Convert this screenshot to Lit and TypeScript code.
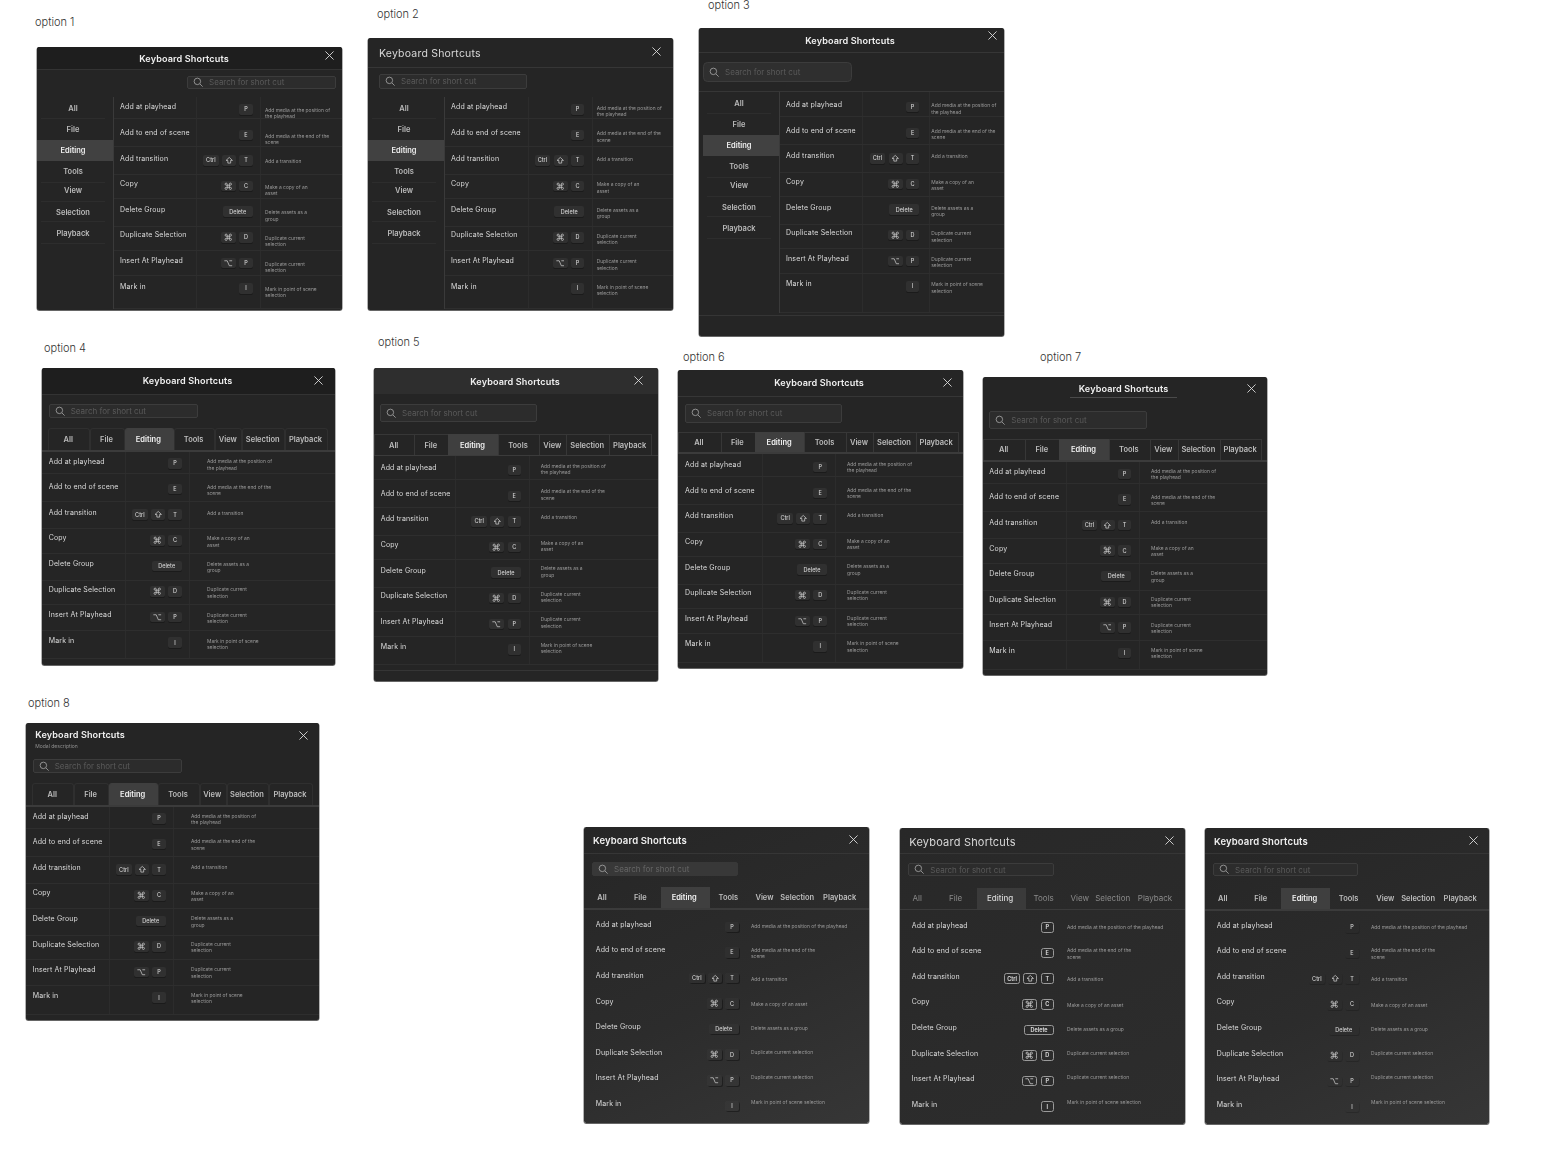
import { LitElement, html, css, svg, nothing } from "lit";
import { customElement, property } from "lit/decorators.js";

type KeyId = "cmd" | "alt" | "shift" | string;
interface Cfg {
  n: number; x: number; y: number; w: number; h: number;
  lx: number; ly: number;
  align: "center" | "left"; titleCls: string; tShift?: number; tDy?: number;
  headH: number; headCls: string; desc?: boolean; underline?: number[];
  closeX: number; closeY: number;
  sx: number; sy: number; sw: number; sh: number; searchCls?: string;
  navY: number; side?: boolean; sideOff?: number;
  tabs?: number[]; tabCls?: string; lineH?: number; tabH?: number;
  labelX: number; labelY: number; col1: number; col2: number; keyR: number; descX: number; dDy: number;
  dividers: boolean; listEnd: number; footer?: number;
  keyCls: string; bg: string; wide?: boolean; soft?: boolean;
}

const NAV = ["All", "File", "Editing", "Tools", "View", "Selection", "Playback"];
const SIDE_H = [22, 21, 21, 21.5, 19, 20.5, 21.5];
const SIDE_DY = [0, 0, 0, 0, -3, 1.5, 1.5];
const ROW_H = [22, 28, 27.5, 24.5, 27.5, 24, 25.5];
const PITCH = 25.6;
const WIDE_DY = [2, 0, 3.3, 3, 1.3, 0, -1, -1.7];
const ROWS: { t: string; k: KeyId[]; d: string; w: string }[] = [
  { t: "Add at playhead", k: ["P"], d: "Add media at the position of|the playhead", w: "Add media at the position of the playhead" },
  { t: "Add to end of scene", k: ["E"], d: "Add media at the end of the|scene", w: "Add media at the end of the|scene" },
  { t: "Add transition", k: ["Ctrl", "shift", "T"], d: "Add a transition", w: "Add a transition" },
  { t: "Copy", k: ["cmd", "C"], d: "Make a copy of an|asset", w: "Make a copy of an asset" },
  { t: "Delete Group", k: ["Delete"], d: "Delete assets as a|group", w: "Delete assets as a group" },
  { t: "Duplicate Selection", k: ["cmd", "D"], d: "Duplicate current|selection", w: "Duplicate current selection" },
  { t: "Insert At Playhead", k: ["alt", "P"], d: "Duplicate current|selection", w: "Duplicate current selection" },
  { t: "Mark in", k: ["I"], d: "Mark in point of scene|selection", w: "Mark in point of scene selection" },
];

const CFGS: Cfg[] = [
  { n: 1, x: 37, y: 47, w: 305, h: 263, lx: 35, ly: 22, align: "center", titleCls: "bold", tShift: -5.5, headH: 23, headCls: "dark", closeX: 325, closeY: 51,
    sx: 187, sy: 76, sw: 149, sh: 12.5, navY: 97, side: true, sideOff: 0,
    labelX: 120, labelY: 107.4, col1: 196, col2: 260, keyR: 252.7, descX: 265, dDy: 2.7, dividers: true, listEnd: 309, keyCls: "filled", bg: "plain" },
  { n: 2, x: 368, y: 38, w: 305, h: 272, lx: 377, ly: 14, align: "left", titleCls: "thin small", tShift: -1, tDy: 1, headH: 29.5, headCls: "line", closeX: 652, closeY: 47,
    sx: 379, sy: 74, sw: 148, sh: 14.5, navY: 97, side: true, sideOff: 0,
    labelX: 451, labelY: 107.4, col1: 528, col2: 591.7, keyR: 584.3, descX: 596.7, dDy: 0.4, dividers: true, listEnd: 309, keyCls: "filled", bg: "plain" },
  { n: 3, x: 699, y: 28, w: 305, h: 308, lx: 708, ly: 5, align: "center", titleCls: "bold", tShift: -1.5, tDy: 1, headH: 24.5, headCls: "line", closeX: 988, closeY: 31,
    sx: 703, sy: 62, sw: 149, sh: 20, searchCls: "round", navY: 92, side: true, sideOff: 4,
    labelX: 786, labelY: 105.3, col1: 861.7, col2: 928.7, keyR: 919.3, descX: 931.3, dDy: 0.1, dividers: true, listEnd: 313, footer: 315, keyCls: "filled", bg: "plain" },
  { n: 4, x: 42, y: 368, w: 293, h: 297, lx: 44, ly: 348, align: "center", titleCls: "bold", tShift: -1, headH: 26.5, headCls: "dark", closeX: 314, closeY: 376,
    sx: 48.7, sy: 404, sw: 149, sh: 14, navY: 428.3,
    tabs: [48.3, 90.3, 124.7, 174, 215.3, 242.3, 285.3, 327.7], tabCls: "rounded", tabH: 21.7, lineH: 2,
    labelX: 48.7, labelY: 461.6, col1: 125.3, col2: 189.3, keyR: 181.7, descX: 207, dDy: 0, dividers: true, listEnd: 659.5, keyCls: "filled", bg: "plain" },
  { n: 5, x: 374, y: 368, w: 284, h: 313, lx: 378, ly: 342, align: "center", titleCls: "bold", tShift: -1, tDy: -0.5, headH: 26, headCls: "lighter", closeX: 634, closeY: 376,
    sx: 380, sy: 404.3, sw: 157, sh: 18, navY: 434.3,
    tabs: [374, 414.3, 448.3, 497.7, 539.3, 566.3, 609.3, 652], tabCls: "boxed", tabH: 20.7, lineH: 1,
    labelX: 380.7, labelY: 468.3, col1: 455.3, col2: 528.7, keyR: 521, descX: 540.7, dDy: -2.3, dividers: true, listEnd: 665, footer: 670, keyCls: "filled", bg: "plain" },
  { n: 6, x: 678, y: 370, w: 285, h: 298, lx: 683, ly: 357, align: "center", titleCls: "bold", tShift: -1.5, tDy: -0.5, headH: 26.7, headCls: "line", closeX: 943, closeY: 378,
    sx: 685, sy: 404.3, sw: 157.3, sh: 18.4, navY: 432.3,
    tabs: [678, 720.7, 755, 804.3, 845.7, 873.3, 915.7, 958.7], tabCls: "boxed", tabH: 20, lineH: 2,
    labelX: 685, labelY: 465.3, col1: 761.7, col2: 835, keyR: 827, descX: 847, dDy: -1.1, dividers: true, listEnd: 663, keyCls: "filled", bg: "plain" },
  { n: 7, x: 983, y: 377, w: 284, h: 298, lx: 1040, ly: 357, align: "center", titleCls: "bold", tDy: 1.5, headH: 20.5, headCls: "none", underline: [1070, 1177], closeX: 1247, closeY: 384,
    sx: 989.3, sy: 411, sw: 157.4, sh: 18, navY: 439,
    tabs: [983, 1025.3, 1059.3, 1108.7, 1150, 1177.7, 1220, 1262.3], tabCls: "boxed", tabH: 20.7, lineH: 2,
    labelX: 989.3, labelY: 471.9, col1: 1066.3, col2: 1139.3, keyR: 1131.3, descX: 1151, dDy: -0.8, dividers: true, listEnd: 670, keyCls: "filled", bg: "plain" },
  { n: 8, x: 26, y: 723, w: 293, h: 297, lx: 28, ly: 703, align: "left", titleCls: "bold", headH: 30, headCls: "none", desc: true, closeX: 298.7, closeY: 731,
    sx: 32.7, sy: 759.3, sw: 149, sh: 14, navY: 783.3,
    tabs: [32.3, 74.3, 109, 158.3, 199.7, 226.7, 269.3, 312.7], tabCls: "rounded", tabH: 21.5, lineH: 2,
    labelX: 32.7, labelY: 816.6, col1: 109.3, col2: 173.3, keyR: 165.7, descX: 191, dDy: -0.6, dividers: true, listEnd: 1015, keyCls: "filled", bg: "plain" },
  { n: 9, x: 584, y: 827, w: 285, h: 296, lx: 0, ly: -100, align: "left", titleCls: "bold wide", tDy: 1, headH: 26.7, headCls: "line", closeX: 849, closeY: 835,
    sx: 592, sy: 862.3, sw: 146, sh: 13.4, searchCls: "flat", navY: 887,
    tabs: [584, 622, 660.7, 709.7, 749, 782, 814.6, 866.8], tabCls: "plain", tabH: 20.7, lineH: 2,
    labelX: 595.7, labelY: 924.9, col1: 660, col2: 745, keyR: 738.7, descX: 751, dDy: 0, dividers: false, listEnd: 1123, keyCls: "ghost", bg: "grad", wide: true },
  { n: 10, x: 900, y: 828, w: 285, h: 296, lx: 0, ly: -100, align: "left", titleCls: "thin", tDy: 0.5, headH: 26.3, headCls: "line", closeX: 1165, closeY: 836,
    sx: 908.3, sy: 863.3, sw: 145.4, sh: 12.7, navY: 887.7,
    tabs: [900, 936.6, 976.7, 1025.7, 1063.7, 1097.7, 1129.7, 1182.3], tabCls: "plain soft", tabH: 21.6, lineH: 1,
    labelX: 911.7, labelY: 925.6, col1: 976, col2: 1060, keyR: 1054, descX: 1067, dDy: 0, dividers: false, listEnd: 1124, keyCls: "outline", bg: "flat", wide: true, soft: true },
  { n: 11, x: 1205, y: 828, w: 284, h: 296, lx: 0, ly: -100, align: "left", titleCls: "bold wide", tDy: 0.5, headH: 26.3, headCls: "line", closeX: 1469, closeY: 836,
    sx: 1213, sy: 863.3, sw: 145, sh: 12.7, navY: 887.7,
    tabs: [1205, 1242.4, 1281, 1330.3, 1369, 1403.6, 1434.6, 1487.8], tabCls: "plain", tabH: 21, lineH: 2,
    labelX: 1216.7, labelY: 925.6, col1: 1280, col2: 1365, keyR: 1358.7, descX: 1371, dDy: 0, dividers: false, listEnd: 1124, keyCls: "faint", bg: "grad", wide: true },
];

const ICONS: Record<string, unknown> = {
  cmd: svg`<path d="M15 6v12a3 3 0 1 0 3-3H6a3 3 0 1 0 3 3V6a3 3 0 1 0-3 3h12a3 3 0 1 0-3-3"/>`,
  alt: svg`<path d="M1 5h8l6 14h8M15 5h8"/>`,
  shift: svg`<path d="M12 4 3 12.5h5V20h8v-7.5h5z"/>`,
};
const KEY_W: Record<string, number> = { Ctrl: 15.5, shift: 14, cmd: 15, alt: 15, Delete: 30 };

@customElement("shortcut-modal")
class ShortcutModal extends LitElement {
  @property({ attribute: false }) cfg!: Cfg;

  static styles = css`
    :host { display: flex; flex-direction: column; position: absolute; box-sizing: border-box; overflow: hidden;
      border-radius: 2.5px; background: #252525; box-shadow: 0 0.5px 0 0.5px #666; color: #d6d6d6;
      font-family: Inter, "Liberation Sans", sans-serif; filter: blur(0.3px); }
    :host(.grad) { background: linear-gradient(155deg, #262626 0%, #2c2c2c 55%, #363636 100%); }
    :host(.flat) { background: linear-gradient(155deg, #282828, #2d2d2d); }
    .head { flex: none; display: flex; align-items: center; box-sizing: border-box; }
    .head.center { justify-content: center; }
    .head.dark { background: #1e1e1e; border-bottom: 1px solid #333; }
    .head.line { border-bottom: 1px solid #363636; }
    .head.lighter { background: #2e2e2e; }
    .head.none { border-bottom: 0; }
    .head-stack { display: flex; flex-direction: column; gap: 4px; padding-top: 1px; }
    .title { white-space: nowrap; color: #f0f0f0; }
    .title.bold { font-size: 9.1px; font-weight: 600; letter-spacing: 0.12px; }
    .title.bold.wide { font-size: 9.5px; letter-spacing: 0.14px; }
    .title.thin { font-size: 11px; font-weight: 400; letter-spacing: 0.2px; color: #d8d8d8; }
    .title.thin.small { font-size: 10.5px; }
    .sub { font-size: 5px; line-height: 5px; color: #909090; }
    .underlined { display: flex; justify-content: center; border-bottom: 1px solid #4a4a4a; height: 100%; align-items: center; box-sizing: border-box; width: 100%; }
    .close { position: absolute; width: 9px; height: 9px; stroke: #dcdcdc; stroke-width: 0.8; fill: none; }
    .zone { flex: none; box-sizing: border-box; }
    .search { display: flex; align-items: center; gap: 5.5px; box-sizing: border-box; padding-left: 5px;
      background: #2c2c2c; border: 1px solid #3c3c3c; border-radius: 2px; font-size: 8px; color: #5a5a5a; white-space: nowrap; }
    .search.round { border-radius: 4.5px; background: #2f2f2f; }
    .search.flat { background: #383838; border-color: #383838; color: #666; }
    .search svg { width: 10.5px; height: 10.5px; stroke: #aaa; stroke-width: 0.9; fill: none; flex: none; }
    .body { flex: none; display: flex; }
    .side { flex: none; display: flex; flex-direction: column; }
    .side-item { flex: none; display: flex; align-items: center; justify-content: center; font-size: 7.5px; font-weight: 600;
      color: #bbb; padding-right: 4px; box-sizing: border-box; position: relative; }
    .side-item.sep::after { content: ""; position: absolute; left: 4px; right: 8px; bottom: 0; height: 1px; background: #2d2d2d; }
    .side-item.on { background: #414141; color: #f0f0f0; }
    .side-line { flex: none; width: 1px; background: #3a3a3a; }
    .main { flex: 1; min-width: 0; display: flex; flex-direction: column; }
    .tabs { flex: none; display: flex; }
    .tab { flex: none; display: flex; align-items: center; justify-content: center; box-sizing: border-box; padding-right: 2px;
      font-size: 7.5px; font-weight: 600; color: #bdbdbd; white-space: nowrap; }
    .rounded .tab { border: 1px solid #2f2f2f; border-bottom: 0; border-radius: 3px 3px 0 0; }
    .boxed .tab { border-left: 1px solid #373737; border-top: 1px solid #373737; }
    .boxed .tab:last-child { border-right: 1px solid #373737; }
    .soft .tab { font-weight: 400; color: #8a8a8a; font-size: 8px; }
    .tab.on { background: #3f3f3f; color: #f2f2f2; border-color: #3f3f3f; }
    .soft .tab.on { color: #d8d8d8; font-weight: 500; background: #3a3a3a; }
    .tline { flex: none; background: #3b3b3b; }
    .row { display: grid; box-sizing: border-box; border-bottom: 1px solid #2e2e2e; flex: none; }
    .row.bare { border-bottom: 0; }
    .cell { min-width: 0; padding-top: var(--pt); }
    .cell + .cell { border-left: 1px solid #2c2c2c; }
    .bare .cell + .cell { border-left: 0; }
    .label { font-size: 7px; line-height: 10px; letter-spacing: 0.15px; color: #dcdcdc; white-space: nowrap; }
    .soft .label { color: #c8c8c8; }
    .keys { display: flex; justify-content: flex-end; gap: 3.3px; padding-top: calc(var(--pt) + 1.65px); align-items: flex-start; }
    .key { flex: none; height: 10.5px; display: flex; align-items: center; justify-content: center; box-sizing: border-box;
      border-radius: 2px; font-size: 5.5px; font-weight: 500; color: #d4d4d4; }
    .key.filled { background: #303030; box-shadow: 0 1px 0 #1b1b1b; }
    .key.ghost { background: rgba(255,255,255,.025); box-shadow: 1px 1px 0 rgba(0,0,0,.35); }
    .key.faint { box-shadow: 0.5px 1px 0 rgba(0,0,0,.18); }
    .key.outline { border: 0.7px solid #9a9a9a; border-radius: 2.5px; color: #e0e0e0; font-weight: 600; }
    .key svg { width: 8.5px; height: 8.5px; stroke: currentColor; stroke-width: 2; fill: none; }
    .desc { font-size: 4.9px; line-height: 6.3px; color: #9a9a9a; white-space: nowrap; padding-top: calc(var(--pt) + 1.85px + var(--ddy)); }
    .foot { flex: 1; border-top: 1px solid #353535; }
  `;

  private nav(c: Cfg) {
    const tabs = c.tabs!;
    return html`<div class="tabs ${c.tabCls}" style="padding-left:${tabs[0] - c.x}px;height:${c.tabH}px">
        ${NAV.map((t, i) => html`<div class="tab ${t === "Editing" ? "on" : ""}" style="width:${tabs[i + 1] - tabs[i]}px">${t}</div>`)}
      </div>
      <div class="tline" style="height:${c.lineH}px"></div>`;
  }

  private side(c: Cfg) {
    return html`<div class="side" style="margin-left:${c.sideOff}px;width:76px">
        ${NAV.map((t, i) => html`<div class="side-item ${t === "Editing" ? "on" : i === 1 ? "" : "sep"}"
          style="height:${SIDE_H[i]}px;padding-top:${Math.max(SIDE_DY[i], 0)}px;padding-bottom:${Math.max(-SIDE_DY[i], 0)}px">${t}</div>`)}
      </div>
      <div class="side-line"></div>`;
  }

  private list(c: Cfg, contentX: number, top: number) {
    const off = c.labelY - top;
    const columns = `${c.col1 - contentX}px ${c.col2 - c.col1}px 1fr`;
    let cum = 0;
    return ROWS.map((r, i) => {
      const base = c.dividers ? (ROW_H[i] ?? 0) : PITCH;
      let h = i === 0 ? base + (off - 10) : base;
      const rowTop = top + cum;
      if (i === ROWS.length - 1) h = c.listEnd - rowTop;
      const pt = c.labelY + PITCH * i - rowTop - 5;
      cum += h;
      const dy = c.wide ? WIDE_DY[i] - 0.6 : c.dDy;
      const border = c.dividers ? 1 : 0;
      return html`<div class="row ${c.dividers ? "" : "bare"}"
        style="height:${h}px;grid-template-columns:${columns};--pt:${pt}px;--ddy:${dy}px">
        <div class="cell label" style="padding-left:${c.labelX - contentX}px">${r.t}</div>
        <div class="cell keys" style="padding-right:${c.col2 - c.keyR}px">
          ${r.k.map((k) => html`<div class="key ${c.keyCls}" style="width:${KEY_W[k] ?? 13.5}px">
            ${ICONS[k] ? html`<svg viewBox="0 0 24 24">${ICONS[k]}</svg>` : k}</div>`)}
        </div>
        <div class="cell desc" style="padding-left:${c.descX - c.col2 - border}px">
          ${(c.wide ? r.w : r.d).split("|").map((l, j) => html`${j ? html`<br />` : nothing}${l}`)}
        </div>
      </div>`;
    });
  }

  render() {
    const c = this.cfg;
    const headBottom = c.y + c.headH;
    const contentX = c.side ? c.x + c.sideOff! + 77 : c.x;
    const tabTotal = c.side ? 0 : c.tabH! + c.lineH!;
    const listTop = c.navY + tabTotal;
    const shift = c.tShift ?? 0;
    const titleStyle = `transform:translate(${shift}px,${c.tDy ?? 0}px)`;
    const title = html`<div class="title ${c.titleCls}" style=${titleStyle}>Keyboard Shortcuts</div>`;
    const padLeft = c.underline ? c.underline[0] - c.x : c.align === "left" ? (c.n === 8 ? 9.3 : c.sx - c.x + 1) : 0;
    const padRight = c.underline ? c.x + c.w - c.underline[1] : 0;
    return html`
      <div class="head ${c.headCls} ${c.align}" style="height:${c.headH}px;padding-left:${padLeft}px;padding-right:${padRight}px">
        ${c.desc
          ? html`<div class="head-stack">${title}<div class="sub">Modal description</div></div>`
          : c.underline
            ? html`<div class="underlined">${title}</div>`
            : title}
      </div>
      <svg class="close" viewBox="0 0 8 8" style="left:${c.closeX - c.x}px;top:${c.closeY - c.y}px"><path d="M.4.4l7.2 7.2M7.6.4.4 7.6"/></svg>
      <div class="zone" style="height:${c.navY - headBottom}px;padding-left:${c.sx - c.x}px;padding-top:${c.sy - headBottom}px;${c.n === 3 ? "border-bottom:1px solid #363636" : ""}">
        <div class="search ${c.searchCls ?? ""}" style="width:${c.sw}px;height:${c.sh}px">
          <svg viewBox="0 0 12 12"><circle cx="5" cy="5" r="3.7"/><path d="M8 8l3 3"/></svg>Search for short cut
        </div>
      </div>
      <div class="body">
        ${c.side ? this.side(c) : nothing}
        <div class="main">
          ${c.side ? nothing : this.nav(c)}
          ${this.list(c, contentX, listTop)}
        </div>
      </div>
      ${c.footer ? html`<div class="foot" style="margin-top:${c.footer - c.listEnd}px"></div>` : nothing}
    `;
  }
}

@customElement("app-root")
class AppRoot extends LitElement {
  static styles = css`
    :host { display: block; position: relative; width: 1544px; height: 1166px; background: #fff; overflow: hidden; }
    .cap { position: absolute; font: 300 11px/8px Inter, "Liberation Sans", sans-serif; color: #333; white-space: nowrap; }
  `;
  render() {
    return html`${CFGS.map((c) => html`
      ${c.ly > 0 ? html`<div class="cap" style="left:${c.lx}px;top:${c.ly - 4}px">option ${c.n}</div>` : nothing}
      <shortcut-modal class="${c.bg}" .cfg=${c} style="left:${c.x}px;top:${c.y}px;width:${c.w}px;height:${c.h}px"></shortcut-modal>
    `)}`;
  }
}
